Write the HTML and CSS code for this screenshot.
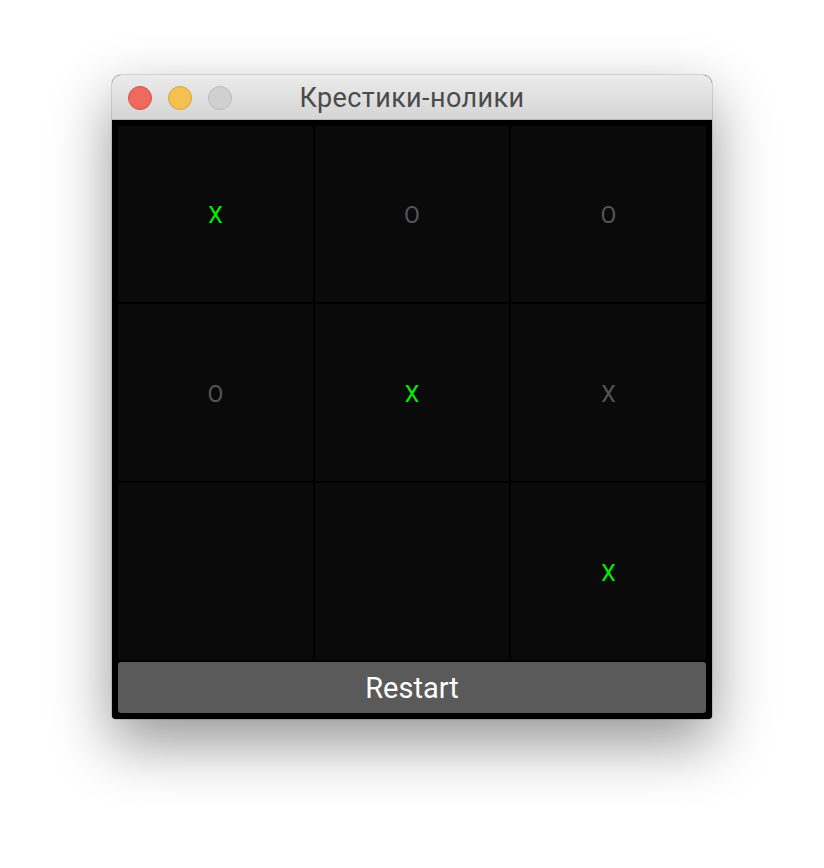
FILE: index.html
```html
<!DOCTYPE html>
<html lang="ru">
<head>
<meta charset="utf-8">
<title>Крестики-нолики</title>
<link rel="stylesheet" href="styles.css">
</head>
<body>
<div class="window">
  <div class="titlebar">
    <div class="lights">
      <span class="light close"></span>
      <span class="light min"></span>
      <span class="light max"></span>
    </div>
    <div class="title">Крестики-нолики</div>
  </div>
  <div class="content">
    <div class="board">
      <div class="cell x">X</div>
      <div class="cell o">O</div>
      <div class="cell o">O</div>
      <div class="cell o">O</div>
      <div class="cell x">X</div>
      <div class="cell o">X</div>
      <div class="cell"></div>
      <div class="cell"></div>
      <div class="cell x">X</div>
    </div>
    <button class="restart">Restart</button>
  </div>
</div>
</body>
</html>
```

FILE: styles.css
```css
html, body {
  margin: 0;
  padding: 0;
  background: #ffffff;
}
body {
  width: 824px;
  height: 868px;
  overflow: hidden;
  font-family: Roboto, "Noto Sans", sans-serif;
}
.window {
  margin: 75px 0 0 112px;
  width: 600px;
  border-radius: 9px 9px 4px 4px;
  box-shadow: 0 24px 60px rgba(0, 0, 0, 0.42), 0 0 0 1px rgba(0, 0, 0, 0.12);
  overflow: hidden;
  background: #000;
}
.titlebar {
  position: relative;
  height: 44px;
  border-bottom: 1px solid #b9b9b9;
  background: linear-gradient(#ebebeb, #d5d5d5);
  display: flex;
  align-items: center;
  justify-content: center;
}
.lights {
  position: absolute;
  left: 16px;
  top: 11px;
  display: flex;
  gap: 16px;
}
.light {
  width: 24px;
  height: 24px;
  border-radius: 50%;
  box-sizing: border-box;
}
.close { background: #ee6a5f; border: 1px solid #d5524a; }
.min { background: #f5c04f; border: 1px solid #d9a23d; }
.max { background: #d0d0d0; border: 1px solid #bbbbbb; }
.title {
  font-size: 27px;
  color: #4b4b4b;
  margin-top: 2px;
  letter-spacing: 0.4px;
}
.content {
  background: #000;
  padding: 6px 6px 6px 6px;
  display: flex;
  flex-direction: column;
  gap: 2px;
}
.board {
  display: grid;
  grid-template-columns: 195px 194px 195px;
  grid-template-rows: 176px 177px 177px;
  gap: 2px;
}
.cell {
  background: #0a0a0a;
  display: flex;
  align-items: center;
  justify-content: center;
  font-size: 23px;
  color: #555555;
  padding-top: 3px;
}
.cell.x { color: #00f000; }
.restart {
  height: 51px;
  border: none;
  border-radius: 3px;
  background: #5a5a5a;
  color: #ffffff;
  font-family: Roboto, "Noto Sans", sans-serif;
  font-size: 29px;
  padding: 0;
}
```
